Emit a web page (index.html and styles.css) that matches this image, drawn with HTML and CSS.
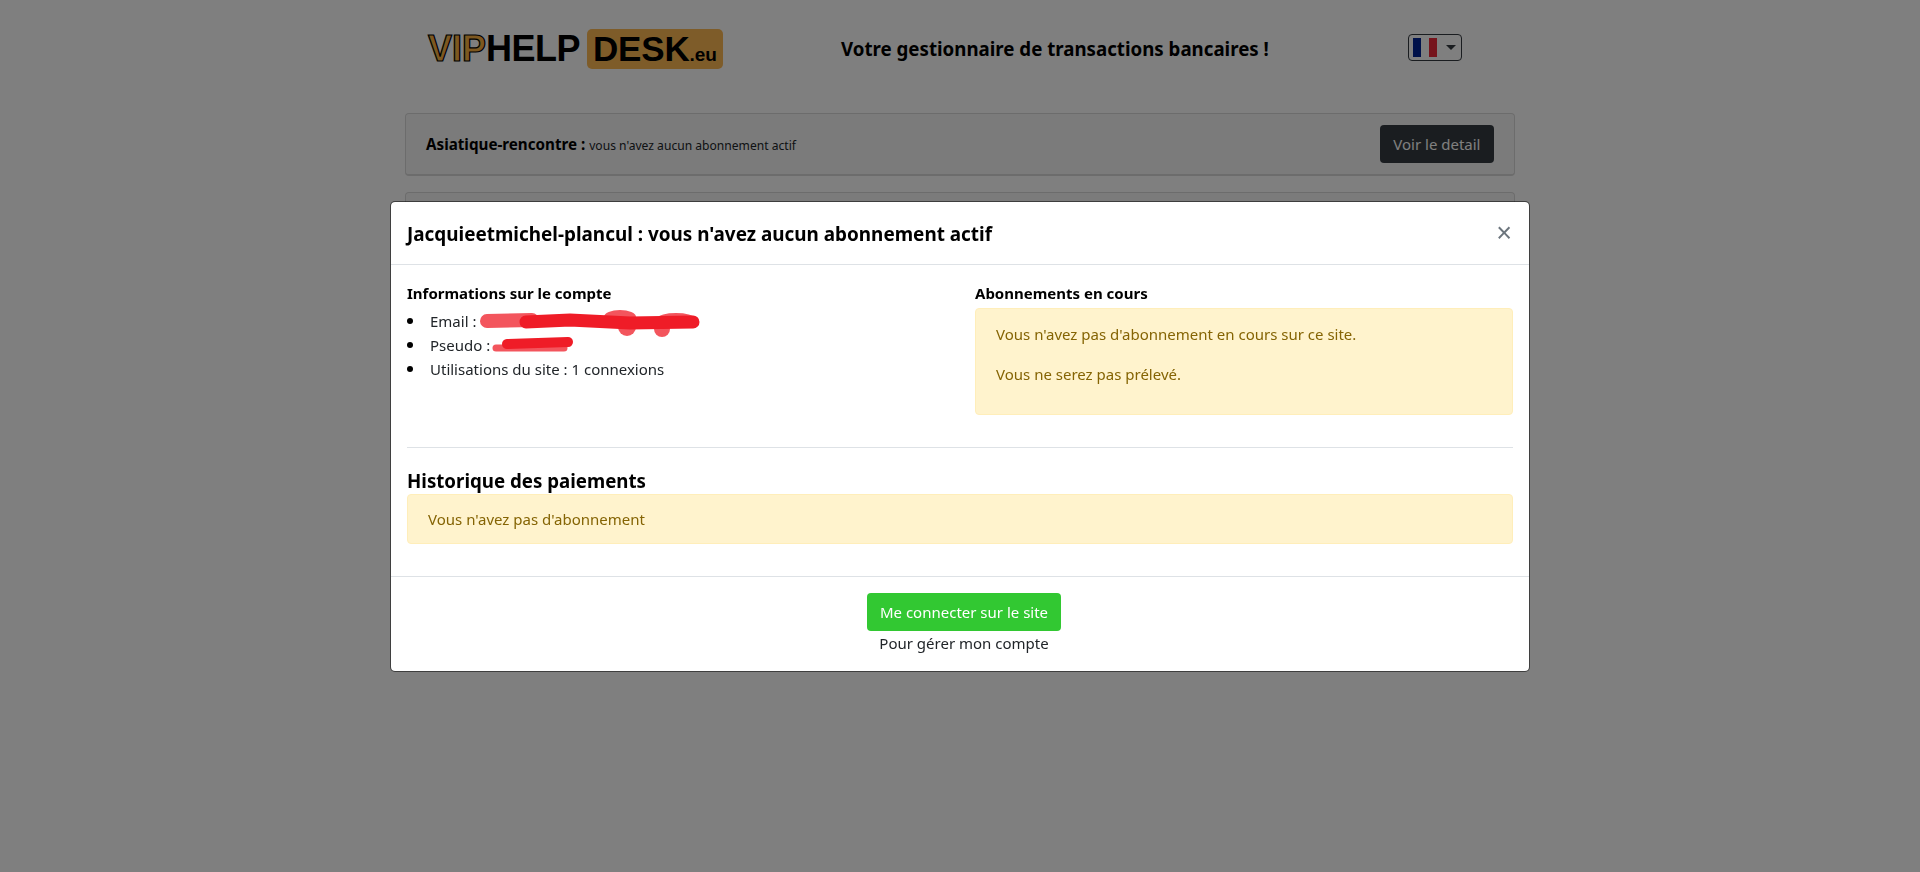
FILE: index.html
```html
<!DOCTYPE html>
<html lang="fr">

<head>
    <meta charset="UTF-8">
    <meta name="viewport" content="width=device-width, initial-scale=1.0">
    <title>VIP Help Desk</title>
    <link rel="stylesheet" href="styles.css">
</head>

<body>

<!-- Page derrière la modale -->
<div class="container">
    <div class="header-row">
        <div class="logo">
            <span class="logo-vip">VIP</span><span class="logo-help">HELP</span>
            <span class="logo-desk"><span class="logo-desk-word">DESK</span><small>.eu</small></span>
        </div>
        <div class="header-title">Votre gestionnaire de transactions bancaires !</div>
        <button class="flag-button" aria-label="Langue">
            <svg class="flag" viewBox="0 0 3 2" preserveAspectRatio="none">
                <rect width="1" height="2" fill="#002395"></rect>
                <rect x="1" width="1" height="2" fill="#ffffff"></rect>
                <rect x="2" width="1" height="2" fill="#ed2939"></rect>
            </svg>
            <span class="caret"></span>
        </button>
    </div>

    <div class="site-card">
        <div><b>Asiatique-rencontre :</b> <small>vous n'avez aucun abonnement actif</small></div>
        <button class="btn btn-dark">Voir le detail</button>
    </div>
    <div class="site-card"></div>
</div>

<div class="backdrop"></div>

<!-- Modale -->
<div class="modal">
    <div class="modal-content">
        <div class="modal-header">
            <h5>Jacquieetmichel-plancul : vous n'avez aucun abonnement actif</h5>
            <button class="close" aria-label="Fermer">×</button>
        </div>
        <div class="modal-body">
            <div class="columns">
                <div>
                    <div class="col-title">Informations sur le compte</div>
                    <ul>
                        <li>Email :
                            <svg class="scribble scribble-email" viewBox="0 0 220 28">
                                <ellipse cx="140" cy="8" rx="16" ry="7" fill="#ef1c27" fill-opacity=".75"></ellipse>
                                <circle cx="147" cy="18" r="9" fill="#ef1c27" fill-opacity=".75"></circle>
                                <circle cx="182" cy="20" r="8" fill="#ef1c27" fill-opacity=".75"></circle>
                                <ellipse cx="196" cy="9" rx="18" ry="5" fill="#ef1c27" fill-opacity=".75"></ellipse>
                                <path d="M7 12 L52 11" fill="none" stroke="#ef1c27" stroke-width="14" stroke-linecap="round" stroke-opacity=".75"></path>
                                <path d="M46 13 L90 11 L150 14 L213 13" fill="none" stroke="#ef1c27" stroke-width="13" stroke-linecap="round"></path>
                            </svg>
                        </li>
                        <li>Pseudo :
                            <svg class="scribble scribble-pseudo" viewBox="0 0 82 17">
                                <path d="M4 12 L72 12" fill="none" stroke="#ef1c27" stroke-width="7" stroke-linecap="round" stroke-opacity=".75"></path>
                                <path d="M15 8 L76 6" fill="none" stroke="#ef1c27" stroke-width="10" stroke-linecap="round"></path>
                            </svg>
                        </li>
                        <li>Utilisations du site : 1 connexions</li>
                    </ul>
                </div>
                <div>
                    <div class="col-title">Abonnements en cours</div>
                    <div class="alert alert-tall">
                        <p>Vous n'avez pas d'abonnement en cours sur ce site.</p>
                        <p>Vous ne serez pas prélevé.</p>
                    </div>
                </div>
            </div>
            <hr>
            <h5 class="history-title">Historique des paiements</h5>
            <div class="alert">Vous n'avez pas d'abonnement</div>
        </div>
        <div class="modal-footer">
            <button class="btn btn-green">Me connecter sur le site</button>
            <div>Pour gérer mon compte</div>
        </div>
    </div>
</div>

</body>
</html>
```

FILE: styles.css
```css
* {
    box-sizing: border-box;
}
body {
    margin: 0;
    background-color: #fff;
    color: #212529;
    font-family: "Noto Sans", "Open Sans", sans-serif;
    font-size: 15px;
    line-height: 24px;
    height: 872px;
    overflow: hidden;
}
.container {
    width: 1140px;
    margin: 0 auto;
    padding: 0 15px;
}
.header-row {
    display: flex;
    align-items: center;
    height: 113px;
    padding: 0 0 15px 22px;
}
.logo {
    display: flex;
    align-items: center;
    width: 296px;
    padding-left: 1px;
    font-family: "Liberation Sans", sans-serif;
    font-weight: bold;
    font-size: 36px;
    line-height: 40px;
    color: #000;
}
.logo-vip {
    color: #fbb040;
    -webkit-text-stroke: 1.2px #000;
}
.logo-help {
    letter-spacing: -0.5px;
}
.logo-desk {
    display: flex;
    align-items: baseline;
    height: 40px;
    margin-left: 7px;
    padding: 0 6px;
    background-color: #fdb853;
    border-radius: 5px;
}
.logo-desk-word {
    font-size: 35px;
    letter-spacing: -0.2px;
}
.logo-desk small {
    font-size: 19px;
}
.header-title {
    width: 428px;
    margin-left: 118px;
    color: #000;
    font-weight: bold;
    font-size: 18.7px;
    white-space: nowrap;
}
.flag-button {
    display: flex;
    align-items: center;
    gap: 9px;
    width: 54px;
    height: 27px;
    margin-left: 139px;
    margin-top: -4px;
    padding: 3px 4px;
    background: none;
    border: 1px solid #343a40;
    border-radius: 4px;
}
.flag {
    width: 24px;
    height: 19px;
}
.caret {
    border-top: 5px solid #343a40;
    border-left: 5px solid transparent;
    border-right: 5px solid transparent;
}
.site-card {
    display: flex;
    align-items: center;
    justify-content: space-between;
    height: 63px;
    margin-bottom: 16px;
    padding: 1px 20px 0;
    background-color: rgba(0, 0, 0, 0.03);
    border: 1px solid rgba(0, 0, 0, 0.125);
    border-bottom-width: 2px;
    border-radius: 4px;
}
.site-card b {
    color: #000;
    font-size: 15.2px;
}
.site-card small {
    font-size: 12.1px;
}
.btn {
    padding: 7px 12px;
    border: 1px solid transparent;
    border-radius: 4px;
    font-family: inherit;
    font-size: 15px;
    line-height: 22px;
    cursor: pointer;
}
.btn-dark {
    margin-top: -2px;
    padding: 7px 12.5px;
    background-color: #343a40;
    color: #fff;
}
.btn-green {
    background-color: #32c832;
    color: #fff;
}
.backdrop {
    position: fixed;
    inset: 0;
    background-color: rgba(0, 0, 0, 0.5);
}
.modal {
    position: fixed;
    inset: 0;
    padding-top: 201px;
}
.modal-content {
    width: 1140px;
    margin: 0 auto;
    background-color: #fff;
    background-clip: padding-box;
    border: 1px solid rgba(0, 0, 0, 0.5);
    border-radius: 5px;
}
.modal-header {
    display: flex;
    align-items: center;
    justify-content: space-between;
    height: 63px;
    padding: 0 16px;
    border-bottom: 1px solid #dee2e6;
}
.modal-header h5 {
    padding-top: 2px;
}
h5 {
    margin: 0;
    color: #000;
    font-size: 18.9px;
    line-height: 24px;
    font-weight: bold;
}
.close {
    padding: 0 1px 0 0;
    background: none;
    border: none;
    color: #6c757d;
    font-family: "Liberation Sans", sans-serif;
    font-size: 27px;
    font-weight: normal;
    cursor: pointer;
}
.modal-body {
    padding: 15px 16px 0;
    height: 311px;
}
.columns {
    display: grid;
    grid-template-columns: 568px 1fr;
    height: 167px;
}
.col-title {
    margin-bottom: 2px;
    color: #000;
    font-weight: bold;
    font-size: 15px;
    line-height: 26px;
}
ul {
    margin: 3px 0 0;
    padding: 0;
    list-style: none;
}
li {
    position: relative;
    display: flex;
    align-items: center;
    height: 24px;
}
li::before {
    content: "";
    width: 6px;
    height: 6px;
    margin-right: 17px;
    border-radius: 50%;
    background-color: #000;
}
.scribble {
    position: absolute;
}
.scribble-email {
    left: 73px;
    top: 0;
    width: 220px;
    height: 28px;
}
.scribble-pseudo {
    left: 85px;
    top: 3px;
    width: 82px;
    height: 17px;
}
.alert {
    padding: 12px 20px;
    background-color: #fff3cd;
    border: 1px solid #ffeeba;
    border-radius: 4px;
    color: #856404;
}
.alert p {
    margin: 0 0 16px;
}
.alert-tall {
    height: 107px;
    padding-top: 13px;
}
hr {
    margin: 0 0 20px;
    border: none;
    border-top: 1px solid #dee2e6;
}
.history-title {
    font-size: 18.7px;
    line-height: 26px;
}
.modal-footer {
    height: 95px;
    padding: 16px 0 0 8px;
    border-top: 1px solid #dee2e6;
    text-align: center;
}
```
